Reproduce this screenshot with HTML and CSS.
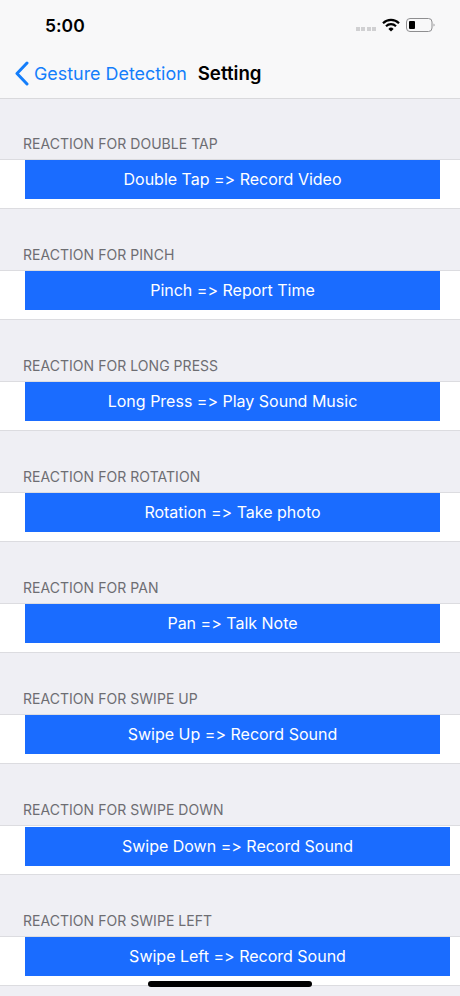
FILE: index.html
```html
<!DOCTYPE html>
<html lang="en">
<head>
<meta charset="utf-8">
<title>Setting</title>
<link rel="stylesheet" href="styles.css">
</head>
<body>
<div class="screen">
  <header class="top">
    <div class="status">
      <span class="time">5:00</span>
      <div class="status-icons">
        <span class="signal"><i></i><i></i><i></i><i></i></span>
        <svg class="wifi" width="18" height="14" viewBox="0 0 18 14"><path d="M1 5.2a11.4 11.4 0 0 1 16 0" fill="none" stroke="#000" stroke-width="2.2"/><path d="M4 8.2a7.2 7.2 0 0 1 10 0" fill="none" stroke="#000" stroke-width="2.2"/><path d="M9 13.4 6.4 10.9a3.7 3.7 0 0 1 5.2 0z" fill="#000"/></svg>
        <svg class="battery" width="29" height="14" viewBox="0 0 29 14"><rect x="0.5" y="0.5" width="25.5" height="13" rx="3.5" fill="none" stroke="#8e8e90"/><rect x="3" y="3" width="6" height="8" rx="1" fill="#000"/><path d="M27.5 5.500v3c.7-.3 1.100-.8 1.100-1.500s-.4-1.200-1.100-1.500z" fill="#9a9a9c"/></svg>
      </div>
    </div>
    <nav class="nav">
      <svg class="chevron" width="16" height="25" viewBox="0 0 16 25"><path d="M13 2 3 12.500 13 23" fill="none" stroke="#147efb" stroke-width="3" stroke-linecap="round" stroke-linejoin="round"/></svg>
      <span class="back">Gesture Detection</span>
      <span class="title">Setting</span>
    </nav>
  </header>

  <section class="group">
    <h2 class="label">REACTION FOR DOUBLE TAP</h2>
    <div class="row"><div class="btn">Double Tap =&gt; Record Video</div></div>
  </section>
  <section class="group">
    <h2 class="label">REACTION FOR PINCH</h2>
    <div class="row"><div class="btn">Pinch =&gt; Report Time</div></div>
  </section>
  <section class="group">
    <h2 class="label">REACTION FOR LONG PRESS</h2>
    <div class="row"><div class="btn">Long Press =&gt; Play Sound Music</div></div>
  </section>
  <section class="group">
    <h2 class="label">REACTION FOR ROTATION</h2>
    <div class="row"><div class="btn">Rotation =&gt; Take photo</div></div>
  </section>
  <section class="group">
    <h2 class="label">REACTION FOR PAN</h2>
    <div class="row"><div class="btn">Pan =&gt; Talk Note</div></div>
  </section>
  <section class="group">
    <h2 class="label">REACTION FOR SWIPE UP</h2>
    <div class="row"><div class="btn">Swipe Up =&gt; Record Sound</div></div>
  </section>
  <section class="group">
    <h2 class="label">REACTION FOR SWIPE DOWN</h2>
    <div class="row"><div class="btn wide lowered">Swipe Down =&gt; Record Sound</div></div>
  </section>
  <section class="group">
    <h2 class="label">REACTION FOR SWIPE LEFT</h2>
    <div class="row"><div class="btn wide">Swipe Left =&gt; Record Sound</div></div>
  </section>
  <div class="home"></div>
</div>
</body>
</html>
```
FILE: styles.css
```css
html, body {
  margin: 0;
  padding: 0;
}
body {
  background: #efeff4;
  font-family: Inter, "Liberation Sans", sans-serif;
  font-variant-ligatures: none;
  font-feature-settings: "calt" 0, "liga" 0;
}
.screen {
  position: relative;
  width: 460px;
  height: 996px;
  overflow: hidden;
  background: #efeff4;
}
.top {
  height: 98px;
  margin-bottom: -1px;
  background: #f8f8f9;
  border-bottom: 1px solid #d9d9dc;
}
.status {
  height: 50px;
  display: flex;
  align-items: center;
  justify-content: space-between;
  padding: 0 24px 0 45px;
}
.time {
  margin-top: 1px;
  font-size: 17.500px;
  font-weight: 600;
  color: #000;
}
.status-icons {
  display: flex;
  align-items: center;
  gap: 6px;
  margin-right: 1px;
}
.signal {
  display: flex;
  gap: 1.500px;
  margin-top: 8px;
}
.signal i {
  width: 4px;
  height: 4px;
  background: #d0d0d2;
}
.nav {
  height: 46px;
  display: flex;
  align-items: center;
  padding-left: 14px;
}
.chevron {
  margin-right: 4px;
}
.back {
  font-size: 17.900px;
  color: #147efb;
}
.title {
  margin-left: 11px;
  font-size: 18.700px;
  font-weight: 600;
  color: #000;
}
.group {
  padding-top: 38px;
}
.label {
  margin: 0;
  height: 23px;
  padding-left: 23px;
  font-size: 14px;
  font-weight: 400;
  line-height: 16px;
  letter-spacing: 0.040px;
  color: #6d6d72;
}
.row {
  height: 48px;
  background: #fff;
  border-top: 1px solid #dcdce0;
  border-bottom: 1px solid #dcdce0;
}
.btn {
  width: 415px;
  height: 38.500px;
  margin-left: 25px;
  display: flex;
  align-items: center;
  justify-content: center;
  background: #1a6cff;
  color: #fff;
  font-size: 16px;
}
.wide {
  width: 425px;
}
.lowered {
  transform: translateY(1px);
}
.home {
  position: absolute;
  left: 148px;
  top: 981px;
  width: 164px;
  height: 6px;
  border-radius: 3px;
  background: #000;
}
```
